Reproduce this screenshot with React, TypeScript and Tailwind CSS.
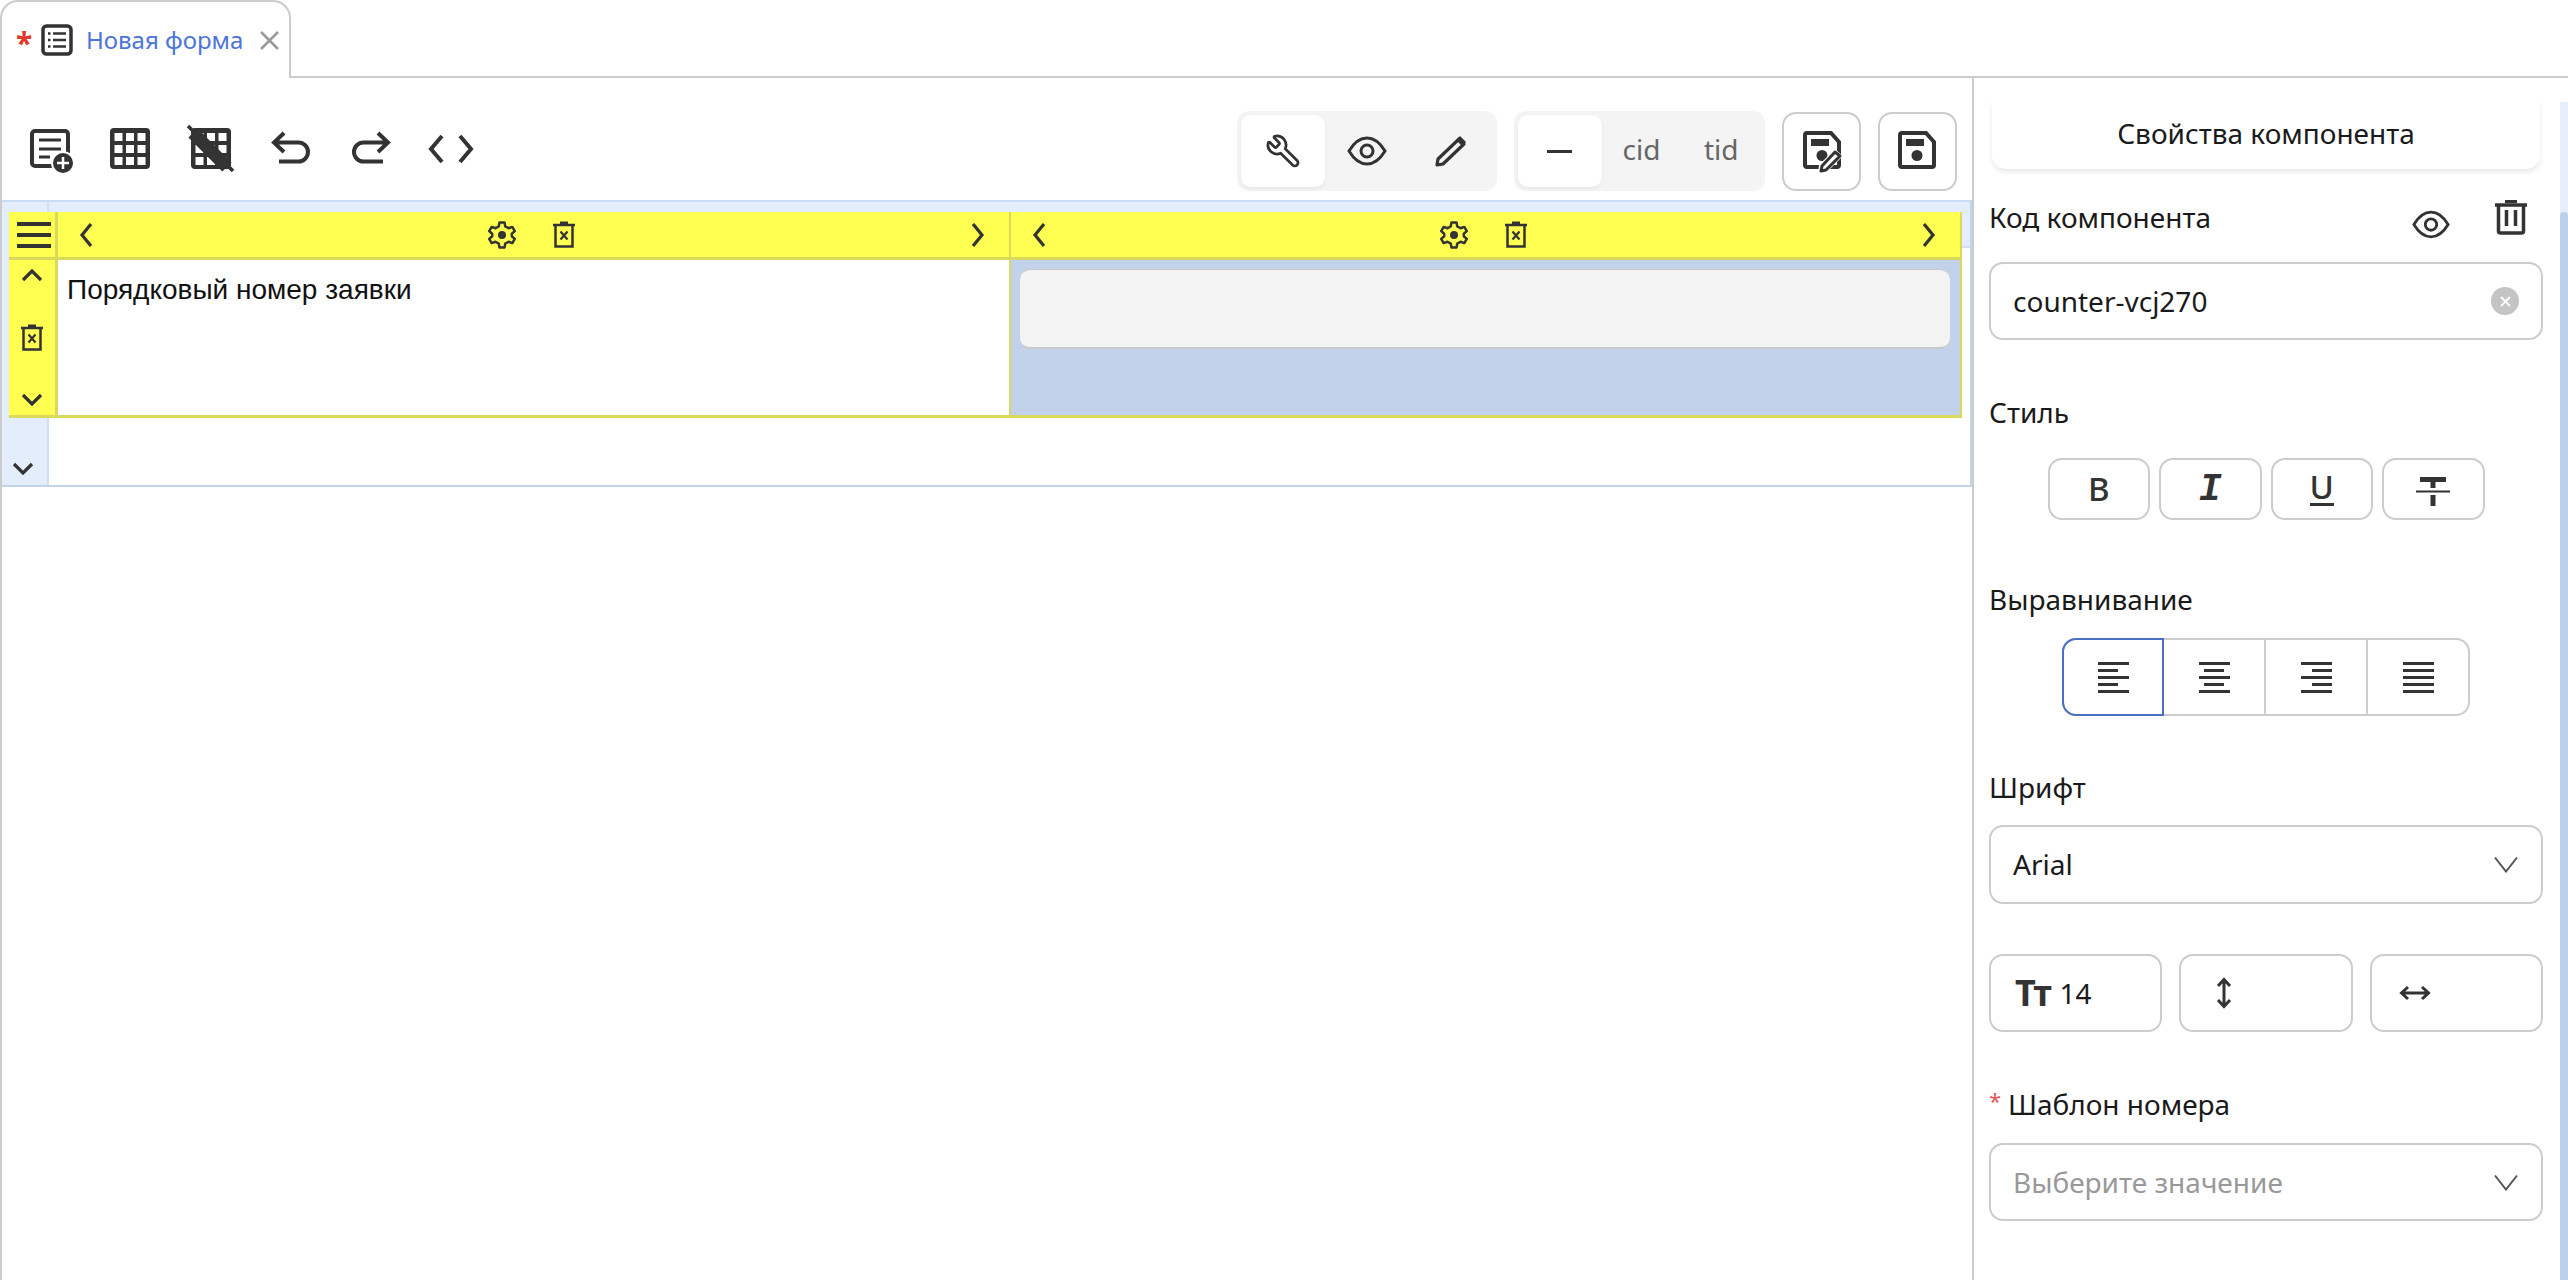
import { Wrench } from 'lucide-react'

const DARK = '#333333'

function FormAddIcon() {
  return (
    <svg className="w-[48px] h-[48px]" viewBox="0 0 48 48" fill="none">
      <rect x="5" y="6" width="36" height="35" rx="3" stroke={DARK} strokeWidth="4" />
      <path d="M12 15H34M12 24H34M12 32H23" stroke={DARK} strokeWidth="3" />
      <circle cx="36" cy="38" r="12" fill="#fff" />
      <circle cx="36" cy="38" r="10" fill={DARK} />
      <path d="M36 32V44M30 38H42" stroke="#fff" strokeWidth="2.5" />
    </svg>
  )
}

function GridSquares({ cells }: { cells: number[][] }) {
  return (
    <>
      {cells.map(([x, y]) => (
        <rect key={`${x}-${y}`} x={x} y={y} width="8" height="8" fill="#fff" />
      ))}
    </>
  )
}

const ALL_CELLS = [7.5, 19, 30.5].flatMap((x) => [8, 20, 32].map((y) => [x, y]))

function GridIcon() {
  return (
    <svg className="w-[48px] h-[48px]" viewBox="0 0 48 48">
      <rect x="3" y="3" width="40" height="41" rx="4" fill={DARK} />
      <GridSquares cells={ALL_CELLS} />
    </svg>
  )
}

function GridOffIcon() {
  return (
    <svg className="w-[52px] h-[52px]" viewBox="0 0 52 52">
      <rect x="6" y="5" width="40" height="41" rx="4" fill={DARK} />
      <GridSquares cells={ALL_CELLS.map(([x, y]) => [x + 3, y + 2])} />
      <path d="M8 10L42 44" stroke={DARK} strokeWidth="13" />
      <path d="M3 3L48 48" stroke={DARK} strokeWidth="3.5" />
    </svg>
  )
}

function UndoIcon({ flip }: { flip?: boolean }) {
  return (
    <svg className={`w-[48px] h-[48px] ${flip ? '-scale-x-100' : ''}`} viewBox="0 0 48 48" fill="none">
      <path d="M17 8L7 17.5L17 27M7 17.5H31.5A9.5 9.5 0 0 1 31.5 36.500H12" stroke={DARK} strokeWidth="4" />
    </svg>
  )
}

function CodeIcon() {
  return (
    <svg className="w-[48px] h-[48px]" viewBox="0 0 48 48" fill="none">
      <path d="M15 11L4 24L15 37M33 11L44 24L33 37" stroke={DARK} strokeWidth="4" />
    </svg>
  )
}

function EyeIcon({ size = 'w-[40px] h-[30px]' }: { size?: string }) {
  return (
    <svg className={size} viewBox="0 0 40 30" fill="none">
      <path d="M2 15C8 5 14 2 20 2S32 5 38 15C32 25 26 28 20 28S8 25 2 15Z" stroke={DARK} strokeWidth="3" />
      <circle cx="20" cy="15" r="6" stroke={DARK} strokeWidth="3" />
    </svg>
  )
}

function PencilIcon() {
  return (
    <svg className="w-[34px] h-[34px]" viewBox="0 0 34 34" fill="none">
      <path d="M25 5L30 10L9 30L3 31L4 25Z" stroke={DARK} strokeWidth="3.200" strokeLinejoin="round" />
      <path d="M26 2L32 8L28 12L22 6Z" fill={DARK} />
    </svg>
  )
}

function SaveIcon({ edit }: { edit?: boolean }) {
  return (
    <svg className="w-[44px] h-[44px]" viewBox="0 0 44 44" fill="none">
      <path d="M6 4H30L38 13V36A2 2 0 0 1 36 38H6A2 2 0 0 1 4 36V6A2 2 0 0 1 6 4Z" stroke={DARK} strokeWidth="4" />
      <rect x="10" y="10" width="18" height="7" fill={DARK} />
      <circle cx="21" cy="26.500" r="5.500" fill={DARK} />
      {edit && (
        <>
          <path d="M17 44L18 36L34 20L42 27L26 43Z" fill="#fff" />
          <path d="M34 23L39 27L25 41L20 42L21 37Z" stroke={DARK} strokeWidth="3" strokeLinejoin="round" />
        </>
      )}
    </svg>
  )
}

function GearIcon() {
  return (
    <svg className="h-[28px] w-[28px]" viewBox="0 0 28 28" fill="none">
      <path
        d="M11.500 1.500H16.500L17.300 5.500L20.500 7.200L24.300 5.900L26.800 10.100L23.800 12.800V15.200L26.800 17.900L24.300 22.100L20.500 20.800L17.300 22.500L16.500 26.500H11.500L10.700 22.500L7.500 20.800L3.700 22.100L1.200 17.900L4.200 15.200V12.800L1.200 10.100L3.700 5.900L7.500 7.200L10.700 5.500Z"
        stroke={DARK}
        strokeWidth="2.500"
        strokeLinejoin="round"
      />
      <circle cx="14" cy="14" r="4" fill={DARK} />
    </svg>
  )
}

function TrashXIcon() {
  return (
    <svg className="w-[24px] h-[27px]" viewBox="0 0 24 27" fill="none">
      <path d="M1 4H23" stroke={DARK} strokeWidth="2.500" />
      <path d="M8 2H16" stroke={DARK} strokeWidth="3" />
      <path d="M3.500 4V25.500H20.500V4" stroke={DARK} strokeWidth="2.500" />
      <path d="M8.500 10.500L15.500 18.500M15.500 10.500L8.500 18.500" stroke={DARK} strokeWidth="2.200" />
    </svg>
  )
}

function TrashIcon() {
  return (
    <svg className="w-[34px] h-[36px]" viewBox="0 0 34 36" fill="none">
      <path d="M1 6H33" stroke={DARK} strokeWidth="3.500" />
      <path d="M11 2.500H23" stroke={DARK} strokeWidth="3" />
      <path d="M4.500 6V32A2 2 0 0 0 6.500 34H27.500A2 2 0 0 0 29.500 32V6" stroke={DARK} strokeWidth="3.500" />
      <path d="M12.500 11V27M21.500 11V27" stroke={DARK} strokeWidth="3.500" />
    </svg>
  )
}

function Chevron({ dir, className }: { dir: 'left' | 'right' | 'up' | 'down'; className?: string }) {
  const paths = {
    left: 'M12 2L3 13L12 24',
    right: 'M2 2L11 13L2 24',
    up: 'M2 11L11 2L20 11',
    down: 'M2 2L11 11L20 2',
  }
  const size = dir === 'left' || dir === 'right' ? 'w-[14px] h-[26px]' : 'w-[22px] h-[13px]'
  const box = dir === 'left' || dir === 'right' ? '0 0 14 26' : '0 0 22 13'
  return (
    <svg className={`${size} ${className ?? ''}`} viewBox={box} fill="none">
      <path d={paths[dir]} stroke={DARK} strokeWidth="3.200" />
    </svg>
  )
}

function SelectChevron() {
  return (
    <svg className="w-[24px] h-[17px]" viewBox="0 0 24 17" fill="none">
      <path d="M1 1.500L12 15.500L23 1.500" stroke="#555" strokeWidth="2" />
    </svg>
  )
}

function ColumnHeader({ width }: { width: string }) {
  return (
    <div className={`${width} flex items-center justify-between pl-[21px] pr-[24px]`}>
      <Chevron dir="left" />
      <div className="flex items-center gap-[36px]">
        <GearIcon />
        <TrashXIcon />
      </div>
      <Chevron dir="right" />
    </div>
  )
}

function AlignIcon({ widths, justify }: { widths: number[]; justify: string }) {
  return (
    <div className={`w-[31px] flex flex-col gap-[4px] ${justify}`}>
      {widths.map((w, i) => (
        <div key={i} className="h-[3px] bg-[#333333]" style={{ width: w }} />
      ))}
    </div>
  )
}

function Label({ children }: { children: React.ReactNode }) {
  return <div className="h-[36px] pb-[2px] flex items-center text-[28px] text-[#1a1a1a]">{children}</div>
}

const styleBtn = 'w-[102.500px] h-[62px] border-2 border-[#cccccc] rounded-[14px] flex items-center justify-center text-[#333333]'
const field = 'h-[78px] border-2 border-[#cccccc] rounded-[14px] flex items-center'

function ToolbarSlot({ children }: { children: React.ReactNode }) {
  return <div className="w-[80px] flex items-center justify-center">{children}</div>
}

export default function App() {
  return (
    <div className="w-[2568px] h-[1280px] overflow-hidden bg-white flex flex-col font-['Noto_Sans',sans-serif]">
      {/* tab bar */}
      <div className="h-[78px] flex shrink-0">
        <div className="w-[291px] h-[78px] border-2 border-b-0 border-[#cccccc] rounded-t-[18px] flex items-center pl-[14px]">
          <span className="text-[#e0392b] font-bold text-[30px] leading-none w-[25px] h-[22px] -mt-[3px]">*</span>
          <svg className="w-[32px] h-[32px]" viewBox="0 0 32 32" fill="none">
            <rect x="2" y="2" width="28" height="28" rx="3.500" stroke={DARK} strokeWidth="3.500" />
            <path d="M12 9.500H25M12 16H25M12 22.500H25" stroke={DARK} strokeWidth="2.500" />
            <path d="M7 9.500H9.500M7 16H9.500M7 22.500H9.500" stroke={DARK} strokeWidth="2.500" />
          </svg>
          <span className="ml-[13px] text-[24px] text-[#4d74d9] whitespace-nowrap">Новая форма</span>
          <svg className="ml-[17px] w-[19px] h-[19px]" viewBox="0 0 19 19" fill="none">
            <path d="M1 1L18 18M18 1L1 18" stroke="#999999" strokeWidth="2.500" />
          </svg>
        </div>
        <div className="flex-1 border-b-2 border-[#cccccc]" />
      </div>

      <div className="flex-1 flex border-l-2 border-[#cccccc] min-h-0">
        {/* editor side */}
        <div className="w-[1970px] shrink-0 flex flex-col">
          <div className="h-[122px] shrink-0 flex items-center pt-[20px] pl-[9px] pr-[15px]">
            <ToolbarSlot><FormAddIcon /></ToolbarSlot>
            <ToolbarSlot><GridIcon /></ToolbarSlot>
            <ToolbarSlot><GridOffIcon /></ToolbarSlot>
            <ToolbarSlot><UndoIcon /></ToolbarSlot>
            <ToolbarSlot><UndoIcon flip /></ToolbarSlot>
            <ToolbarSlot><CodeIcon /></ToolbarSlot>
            <div className="ml-auto flex items-center gap-[17px] mt-[4px]">
              <div className="h-[80px] w-[260px] bg-[#f4f4f4] rounded-[12px] p-[4px] flex">
                <div className="w-[84px] bg-white rounded-[10px] shadow-[0_2px_4px_rgba(0,0,0,0.06)] flex items-center justify-center">
                  <Wrench className="w-[36px] h-[36px] -scale-x-100 text-[#333333]" strokeWidth={1.800} />
                </div>
                <div className="w-[84px] flex items-center justify-center"><EyeIcon /></div>
                <div className="w-[84px] flex items-center justify-center"><PencilIcon /></div>
              </div>
              <div className="h-[80px] w-[251px] bg-[#f4f4f4] rounded-[12px] p-[4px] flex">
                <div className="w-[84px] bg-white rounded-[10px] shadow-[0_2px_4px_rgba(0,0,0,0.06)] flex items-center justify-center">
                  <div className="w-[25px] h-[3px] bg-[#333333]" />
                </div>
                <div className="w-[80px] flex items-center justify-center text-[28px] text-[#666666] -mt-[4px]">cid</div>
                <div className="w-[80px] flex items-center justify-center text-[28px] text-[#666666] -mt-[4px]">tid</div>
              </div>
              <div className="w-[79px] h-[79px] border-2 border-[#cccccc] rounded-[14px] flex items-center justify-center pl-[2px]"><SaveIcon edit /></div>
              <div className="w-[79px] h-[79px] border-2 border-[#cccccc] rounded-[14px] flex items-center justify-center"><SaveIcon /></div>
            </div>
          </div>

          {/* canvas */}
          <div className="relative w-[1970px] h-[287px] shrink-0 border-t-2 border-b-2 border-r-2 border-t-[#c9dcf5] border-b-[#c3d3e8] border-r-[#c3d3e8] pt-[10px] pl-[7px]">
            <div className="absolute left-0 right-0 top-0 h-[46px] bg-[#e3edfb] border-b-2 border-[#cfdff5]" />
            <div className="absolute left-0 top-0 bottom-0 w-[47px] bg-[#e3edfb] border-r-2 border-[#cfdff5]" />

            <div className="relative w-[1953px] h-[206px] flex flex-col font-['Liberation_Sans',sans-serif] border-r-2 border-b-[3px] border-[#d9d95c]">
              <div className="h-[48px] flex bg-[#ffff52] border-b-[3px] border-[#d9d95c]">
                <div className="w-[49px] border-r-[3px] border-[#d9d95c] flex items-center justify-center">
                  <div className="w-[34px] ml-[3px] flex flex-col gap-[7px]">
                    <div className="h-[4px] bg-[#333333]" />
                    <div className="h-[4px] bg-[#333333]" />
                    <div className="h-[4px] bg-[#333333]" />
                  </div>
                </div>
                <ColumnHeader width="w-[951px]" />
                <div className="w-[2px] bg-[#d9d95c]" />
                <ColumnHeader width="w-[949px]" />
              </div>
              <div className="flex-1 flex min-h-0">
                <div className="w-[49px] bg-[#ffff52] border-r-[3px] border-[#d9d95c] flex flex-col items-center justify-between pt-[9px] pb-[9px]">
                  <Chevron dir="up" />
                  <TrashXIcon />
                  <Chevron dir="down" />
                </div>
                <div className="w-[951px] bg-white pl-[9px] pt-[14px] text-[28px] leading-[32px] text-[#111111]">Порядковый номер заявки</div>
                <div className="w-[2px] bg-[#d9d95c]" />
                <div className="flex-1 bg-[#c1d2ea] pt-[9px] pl-[9px] pr-[10px]">
                  <div className="h-[80px] bg-[#f3f3f3] rounded-[10px] border-b-2 border-t border-[#c9c9c9]" />
                </div>
              </div>
            </div>
            <Chevron dir="down" className="absolute left-[10px] bottom-[10px]" />
          </div>
        </div>

        {/* properties panel */}
        <div className="flex-1 flex pt-[24px] border-l-2 border-[#cccccc] min-w-0">
          <div className="w-[586px] pl-[15px] pr-[17px]">
            <div className="mx-[3px] h-[67px] rounded-b-[14px] bg-white shadow-[0_3px_5px_rgba(0,0,0,0.09)] flex items-center justify-center pb-[5px] text-[28px] text-[#1a1a1a]">
              Свойства компонента
            </div>
            <div className="mt-[29px] mb-[24px] h-[40px] flex items-center text-[28px] text-[#1a1a1a]">
              <span className="-mt-[2px]">Код компонента</span>
              <div className="ml-auto mt-[13px]"><EyeIcon size="w-[38px] h-[29px]" /></div>
              <div className="ml-[44px] mr-[15px] -mt-[2px]"><TrashIcon /></div>
            </div>
            <div className={`${field} pl-[22px] pr-[22px] text-[28px] text-[#1a1a1a] justify-between`}>
              counter-vcj270
              <div className="w-[28px] h-[28px] rounded-full bg-[#c4c4c4] flex items-center justify-center">
                <svg className="w-[11px] h-[11px]" viewBox="0 0 11 11" fill="none">
                  <path d="M1 1L10 10M10 1L1 10" stroke="#fff" strokeWidth="1.800" />
                </svg>
              </div>
            </div>

            <div className="mt-[55px]"><Label>Стиль</Label></div>
            <div className="mt-[27px] flex justify-center gap-[9px]">
              <div className={`${styleBtn} text-[33px] font-medium`}>B</div>
              <div className={`${styleBtn} text-[38px] font-bold italic font-['Liberation_Mono',monospace]`}>I</div>
              <div className={`${styleBtn} flex-col`}>
                <span className="text-[33px] leading-[30px] font-medium">U</span>
                <div className="w-[24px] h-[3px] bg-[#333333] mt-[1px]" />
              </div>
              <div className={styleBtn}>
                <svg className="w-[36px] h-[29px] mt-[4px]" viewBox="0 0 36 29" fill="none">
                  <path d="M5 2.500H31M18 2.500V11" stroke={DARK} strokeWidth="5" />
                  <path d="M1 14.500H35" stroke={DARK} strokeWidth="2" />
                  <path d="M18 18V29" stroke={DARK} strokeWidth="5" />
                </svg>
              </div>
            </div>

            <div className="mt-[62px]"><Label>Выравнивание</Label></div>
            <div className="mt-[20px] flex justify-center">
              <div className="flex h-[78px] w-[408px] border-2 border-[#cccccc] rounded-[14px]">
                <div className="w-[102px] -m-[2px] border-2 border-[#4a6fc4] rounded-l-[14px] flex items-center justify-center">
                  <AlignIcon widths={[31, 20, 31, 20, 31]} justify="items-start" />
                </div>
                <div className="w-[102px] ml-[2px] border-r-2 border-[#cccccc] flex items-center justify-center">
                  <AlignIcon widths={[31, 20, 31, 20, 31]} justify="items-center" />
                </div>
                <div className="w-[102px] border-r-2 border-[#cccccc] flex items-center justify-center">
                  <AlignIcon widths={[31, 20, 31, 20, 31]} justify="items-end" />
                </div>
                <div className="flex-1 flex items-center justify-center">
                  <AlignIcon widths={[31, 31, 31, 31, 31]} justify="items-start" />
                </div>
              </div>
            </div>

            <div className="mt-[54px]"><Label>Шрифт</Label></div>
            <div className={`${field} mt-[19px] h-[79px] pl-[22px] pr-[23px] text-[28px] text-[#1a1a1a] justify-between`}>
              <span className="-mt-[1px]">Arial</span>
              <SelectChevron />
            </div>

            <div className="mt-[50px] grid grid-cols-3 gap-[17px]">
              <div className={`${field} pl-[24px]`}>
                <span className="text-[36px] font-bold text-[#333333] tracking-[-2px]">Тт</span>
                <span className="ml-[10px] text-[28px] text-[#1a1a1a]">14</span>
              </div>
              <div className={`${field} pl-[35px]`}>
                <svg className="w-[16px] h-[32px]" viewBox="0 0 16 32" fill="none">
                  <path d="M8 3V29M2 9L8 2.500L14 9M2 23L8 29.500L14 23" stroke={DARK} strokeWidth="3" />
                </svg>
              </div>
              <div className={`${field} pl-[27px]`}>
                <svg className="w-[32px] h-[16px]" viewBox="0 0 32 16" fill="none">
                  <path d="M3 8H29M9 2L2.500 8L9 14M23 2L29.500 8L23 14" stroke={DARK} strokeWidth="3" />
                </svg>
              </div>
            </div>

            <div className="mt-[55px]">
              <Label>
                <span className="text-[#e0565a] text-[22px] w-[19px] -mt-[8px]">*</span>
                Шаблон номера
              </Label>
            </div>
            <div className={`${field} mt-[20px] pl-[22px] pr-[23px] text-[28px] text-[#999999] justify-between`}>
              Выберите значение
              <SelectChevron />
            </div>
          </div>
          <div className="w-[8px] ml-auto bg-[#e6eefb] flex flex-col">
            <div className="mt-[110px] flex-1 bg-[#bccfe9] rounded-t-[6px]" />
          </div>
        </div>
      </div>
    </div>
  )
}
